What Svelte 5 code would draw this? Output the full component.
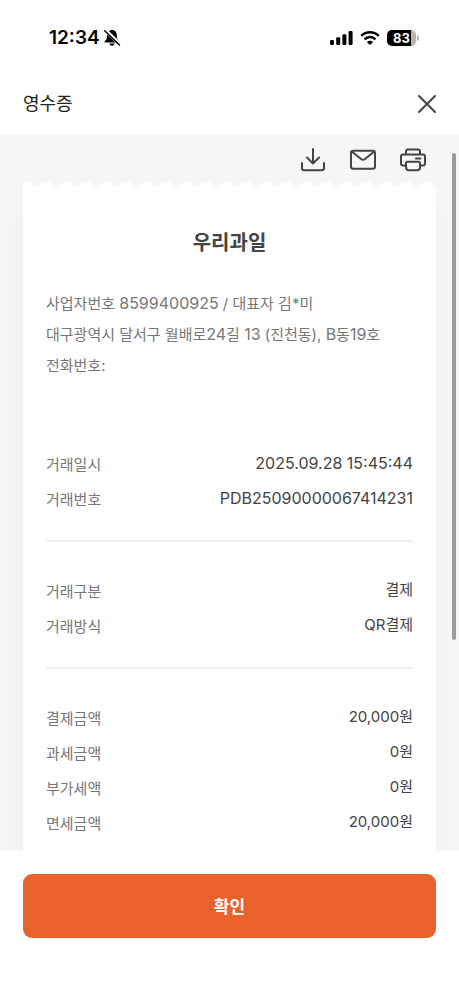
<script>
  const merchant = {
    name: '우리과일',
    lines: [
      '사업자번호 8599400925 / 대표자 김*미',
      '대구광역시 달서구 월배로24길 13 (진천동), B동19호',
      '전화번호:'
    ]
  };

  const groups = [
    [
      ['거래일시', '2025.09.28 15:45:44'],
      ['거래번호', 'PDB25090000067414231']
    ],
    [
      ['거래구분', '결제'],
      ['거래방식', 'QR결제']
    ],
    [
      ['결제금액', '20,000원'],
      ['과세금액', '0원'],
      ['부가세액', '0원'],
      ['면세금액', '20,000원']
    ]
  ];

  // Latin runs are set one size larger than the Hangul around them.
  const runs = (text) => text.split(/([0-9A-Z]+)/).filter(Boolean);
  const isLatin = (text) => /^[\x20-\x7e]+$/.test(text);
</script>

<div class="screen">
  <div class="status">
    <div class="clock">
      <span>12:34</span>
      <svg width="18" height="18" viewBox="0 0 18 18" aria-hidden="true">
        <path d="M9 1C5.800 1 4.300 3.300 4.200 6.200C4.100 9.300 3.500 10.400 1.800 12.200C1.300 12.900 1.600 13.500 2.300 13.500H15.700C16.400 13.500 16.700 12.900 16.200 12.200C14.500 10.400 13.900 9.300 13.800 6.200C13.700 3.300 12.200 1 9 1Z" />
        <path d="M6.500 14.600H11.500C11.200 16.100 10.300 16.800 9 16.800S6.800 16.100 6.500 14.600Z" />
        <path d="M2.400 1.200L17.200 15.400" stroke="#fff" stroke-width="3.400" />
        <path d="M1.700 1.800L16.500 16" stroke="#000" stroke-width="1.500" stroke-linecap="round" />
      </svg>
    </div>
    <div class="signals">
      <svg width="23" height="16" viewBox="0 0 23 16" aria-hidden="true">
        <rect x="0" y="10" width="4" height="5" rx="1.200" />
        <rect x="6.200" y="7.300" width="4" height="7.700" rx="1.200" />
        <rect x="12.400" y="4.300" width="4" height="10.700" rx="1.200" />
        <rect x="18.600" y="1" width="4" height="14" rx="1.200" />
      </svg>
      <svg width="20" height="16" viewBox="0 0 20 16" aria-hidden="true">
        <g fill="none" stroke="#000" stroke-width="2.500">
          <path d="M1.200 5.900C6.200 1 13.800 1 18.800 5.900" />
          <path d="M4.500 9.300C7.600 6.300 12.400 6.300 15.500 9.300" />
        </g>
        <path d="M10 15L6.900 11.900C8.700 10.400 11.300 10.400 13.100 11.900Z" />
      </svg>
      <div class="battery"><span>83</span></div>
    </div>
  </div>

  <header>
    <h1>영수증</h1>
    <button class="icon" aria-label="닫기">
      <svg width="18" height="18" viewBox="0 0 18 18">
        <path d="M1 1L17 17M17 1L1 17" />
      </svg>
    </button>
  </header>

  <div class="body">
    <main>
      <div class="tools">
        <button class="icon" aria-label="저장">
          <svg width="26" height="26" viewBox="0 0 26 26">
            <path d="M13 2V16M7 10.500L13 16.500L19 10.500M2 16V21C2 22.500 2.700 23.200 4.200 23.200H21.800C23.300 23.200 24 22.500 24 21V16" />
          </svg>
        </button>
        <button class="icon" aria-label="메일">
          <svg width="26" height="26" viewBox="0 0 26 26">
            <rect x="1" y="3.800" width="24" height="18" rx="2.200" />
            <path d="M2 4.800L11.400 12.200Q13 13.400 14.600 12.200L24 4.800" />
          </svg>
        </button>
        <button class="icon" aria-label="인쇄">
          <svg width="26" height="26" viewBox="0 0 26 26">
            <path d="M6 7.500V4.500Q6 2.500 8 2.500H18Q20 2.500 20 4.500V7.500M6 18.500H3.200Q1 18.500 1 16.300V9.700Q1 7.500 3.200 7.500H22.800Q25 7.500 25 9.700V16.300Q25 18.500 22.800 18.500H20M16 11.500H20.500" />
            <path d="M7.500 14.800H18.500Q20 14.800 20 16.300V20.200Q20 23.200 17 23.200H9Q6 23.200 6 20.200V16.300Q6 14.800 7.500 14.800Z" />
          </svg>
        </button>
      </div>

      <article>
        <svg class="edge" width="100%" height="6" aria-hidden="true">
          <defs>
            <pattern id="scallop" width="20" height="6" x="4" patternUnits="userSpaceOnUse">
              <path d="M0 6V0H3C6 0 6 5 10 5S14 0 17 0H20V6Z" fill="#fefefe" />
            </pattern>
          </defs>
          <rect width="100%" height="6" fill="url(#scallop)" />
        </svg>
        <div class="paper">
          <h2>{merchant.name}</h2>
          <address>
            {#each merchant.lines as line}
              <div>{#each runs(line) as run}<span class:latin={isLatin(run)}>{run}</span>{/each}</div>
            {/each}
          </address>
          {#each groups as group}
            <dl>
              {#each group as [label, value]}
                <div class="row">
                  <dt>{label}</dt>
                  <dd class:latin={isLatin(value)}>{value}</dd>
                </div>
              {/each}
            </dl>
          {/each}
        </div>
      </article>
    </main>
    <div class="thumb"></div>
  </div>

  <footer>
    <button class="confirm">확인</button>
  </footer>
</div>

<style>
  :global(body) {
    margin: 0;
    background: #fff;
  }
  .screen {
    display: flex;
    flex-direction: column;
    height: 100vh;
    background: #fefefe;
    color: #444;
    font-family: Inter, 'Noto Sans CJK KR', sans-serif;
    font-size: 15px;
  }
  .latin {
    font-size: 16px;
  }
  .status {
    display: flex;
    justify-content: space-between;
    align-items: center;
    padding: 26px 43px 0 49px;
    line-height: 24px;
    color: #000;
  }
  .clock {
    display: flex;
    align-items: center;
    gap: 3px;
    font-size: 19px;
    font-weight: 600;
  }
  .signals {
    display: flex;
    align-items: center;
    gap: 7px;
  }
  .battery {
    position: relative;
    width: 29px;
    height: 16px;
    border-radius: 5px;
    background: linear-gradient(90deg, #000 24px, #b4b4b4 24px);
    color: #fff;
    font-size: 13px;
    font-weight: 700;
    line-height: 16px;
    text-align: center;
  }
  .battery::after {
    content: '';
    position: absolute;
    left: 30px;
    top: 5px;
    width: 2px;
    height: 6px;
    border-radius: 0 2px 2px 0;
    background: #b4b4b4;
  }
  header {
    display: flex;
    justify-content: space-between;
    align-items: center;
    padding: 38px 23px 15px;
  }
  h1 {
    margin: 0;
    font-size: 18px;
    font-weight: 400;
    line-height: 32px;
    color: #222;
  }
  .icon {
    display: flex;
    padding: 0;
    border: 0;
    background: none;
    cursor: pointer;
  }
  .icon svg {
    fill: none;
    stroke: #444;
    stroke-width: 2;
    stroke-linecap: round;
    stroke-linejoin: round;
  }
  .body {
    position: relative;
    display: flex;
    flex: 1;
    min-height: 0;
    background: #f6f6f6;
  }
  main {
    display: flex;
    flex: 1;
    flex-direction: column;
    overflow-y: auto;
    scrollbar-width: none;
  }
  .tools {
    display: flex;
    justify-content: flex-end;
    gap: 24px;
    padding: 12px 33px 9px;
  }
  article {
    display: flex;
    flex: 1 0 auto;
    flex-direction: column;
    margin: 0 23px;
  }
  .edge {
    display: block;
  }
  .paper {
    flex: 1;
    padding: 39px 23px 0;
    background: #fefefe;
    box-shadow: 0 24px 20px rgba(0, 0, 0, 0.04);
  }
  h2 {
    margin: 0;
    font-size: 20px;
    font-weight: 700;
    line-height: 32px;
    text-align: center;
  }
  address {
    padding: 29px 0 71px;
    color: #777;
    font-style: normal;
    line-height: 31px;
  }
  dl {
    display: flex;
    flex-direction: column;
    gap: 9px;
    margin: 0;
  }
  dl + dl {
    margin-top: 27px;
    padding-top: 37px;
    border-top: 2px solid #f1f1f1;
  }
  .row {
    display: flex;
    justify-content: space-between;
    align-items: flex-start;
  }
  dt {
    color: #777;
    line-height: 26px;
  }
  dd {
    margin: 0;
    line-height: 22px;
  }
  .thumb {
    position: absolute;
    top: 18px;
    right: 3px;
    width: 4px;
    height: 68%;
    border-radius: 2px;
    background: #9c9c9c;
  }
  footer {
    padding: 23px 23px 62px;
  }
  .confirm {
    width: 100%;
    padding: 17px 16px 15px;
    border: 0;
    border-radius: 9px;
    background: #e9622b;
    color: #fff;
    font-family: inherit;
    font-size: 17px;
    font-weight: 600;
    line-height: 32px;
    cursor: pointer;
  }
</style>
